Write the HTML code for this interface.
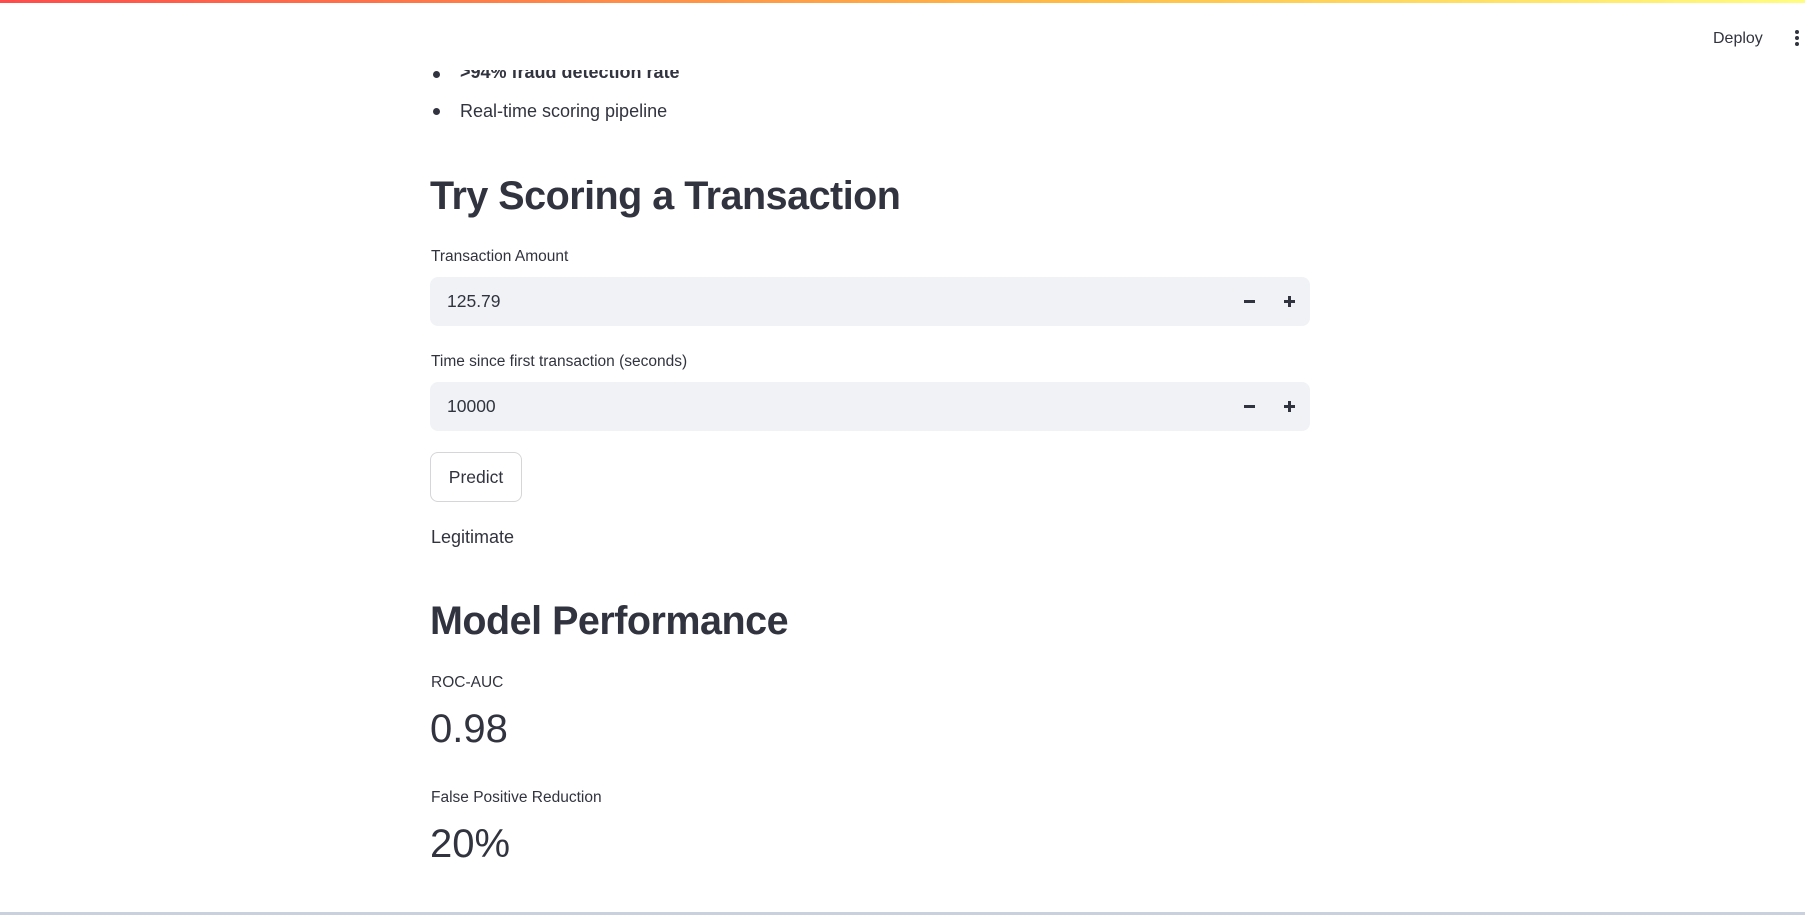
<!DOCTYPE html>
<html><head><meta charset="utf-8"><style>
*{margin:0;padding:0;box-sizing:border-box}
body{width:1805px;height:915px;position:relative;overflow:hidden;background:#fff;font-family:"Liberation Sans",sans-serif;color:#31333f}
.a{position:absolute;white-space:nowrap}
.bar{position:absolute;left:0;top:0;width:1805px;height:3px;background:linear-gradient(90deg,#ff4b4b,#ffbd45 60%,#fffd80)}
.lbl{font-size:15.5px;line-height:18px}
.inp{position:absolute;left:430px;width:880px;height:49px;background:#f0f2f6;border-radius:8px}
.inp .v{position:absolute;left:17px;top:14px;font-size:17.5px}
.inp .m{position:absolute;left:814px;top:23px;width:11px;height:3px;background:#31333f}
.inp .p{position:absolute;left:854px;top:23px;width:11px;height:3px;background:#31333f}
.inp .p:after{content:"";position:absolute;left:4px;top:-4px;width:3px;height:11px;background:#31333f}
h2{position:absolute;font-size:39.5px;font-weight:bold;letter-spacing:-0.5px;line-height:46px;white-space:nowrap}
.big{font-size:40px;line-height:48px}
.dot{position:absolute;width:7px;height:7px;border-radius:50%;background:#31333f}
</style></head><body>
<div style="position:absolute;left:420px;top:70px;width:400px;height:20px;overflow:hidden">
<div class="dot" style="left:13px;top:1px"></div>
<div class="a" style="left:40px;top:-9px;font-size:18px;line-height:22px;font-weight:bold">&gt;94% fraud detection rate</div>
</div>
<div class="bar"></div>
<div class="a" style="left:1713px;top:30px;font-size:16px">Deploy</div>
<div class="a" style="left:1795px;top:30px;width:4px">
<div style="width:4px;height:4px;border-radius:2px;background:#31333f;margin-bottom:2px"></div>
<div style="width:4px;height:4px;border-radius:2px;background:#31333f;margin-bottom:2px"></div>
<div style="width:4px;height:4px;border-radius:2px;background:#31333f"></div></div>
<div class="dot" style="left:433px;top:108px"></div>
<div class="a" style="left:460px;top:101px;font-size:18px">Real-time scoring pipeline</div>
<h2 style="left:430px;top:173px">Try Scoring a Transaction</h2>
<div class="a lbl" style="left:431px;top:248px">Transaction Amount</div>
<div class="inp" style="top:277px"><div class="a v">125.79</div><div class="m"></div><div class="p"></div></div>
<div class="a lbl" style="left:431px;top:353px">Time since first transaction (seconds)</div>
<div class="inp" style="top:382px"><div class="a v">10000</div><div class="m"></div><div class="p"></div></div>
<div class="a" style="left:430px;top:452px;width:92px;height:50px;border:1px solid rgba(49,51,63,.2);border-radius:8px;font-size:17.5px;line-height:48px;text-align:center">Predict</div>
<div class="a" style="left:431px;top:527px;font-size:18px">Legitimate</div>
<h2 style="left:430px;top:598px">Model Performance</h2>
<div class="a lbl" style="left:431px;top:674px">ROC-AUC</div>
<div class="a big" style="left:430px;top:705px">0.98</div>
<div class="a lbl" style="left:431px;top:789px">False Positive Reduction</div>
<div class="a big" style="left:430px;top:820px">20%</div>
<div class="a" style="left:0;top:912px;width:1805px;height:3px;background:#c9d1de"></div>
</body></html>
